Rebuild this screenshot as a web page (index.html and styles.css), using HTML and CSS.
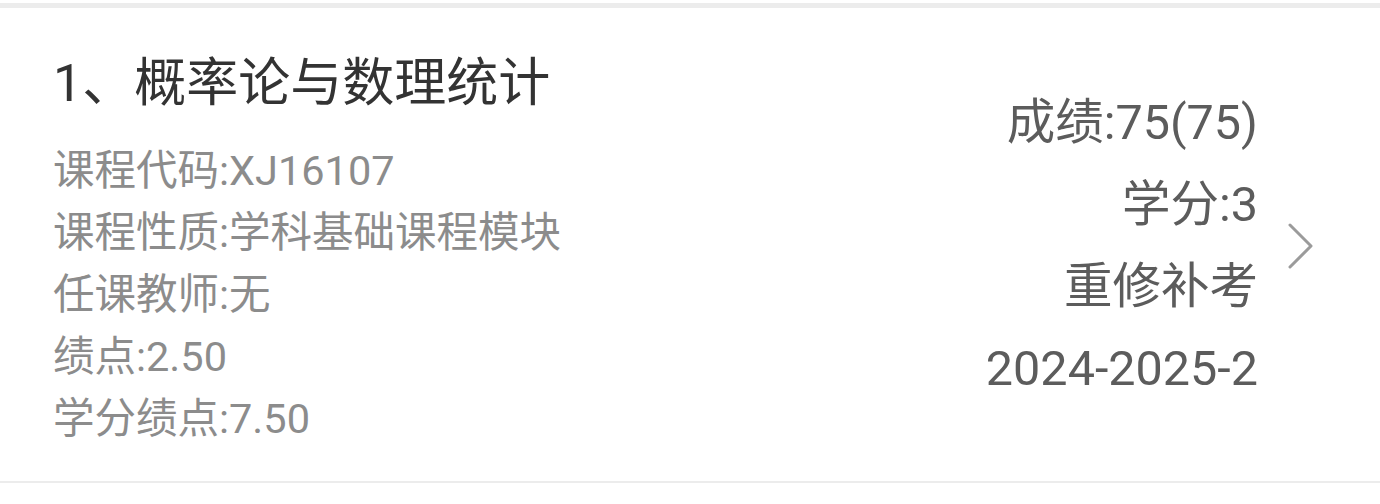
FILE: index.html
```html
<!DOCTYPE html>
<html lang="zh-CN">
<head>
    <meta charset="UTF-8">
    <meta name="viewport" content="width=device-width, initial-scale=1.0">
    <title>成绩查询</title>
    <link rel="stylesheet" href="styles.css">
</head>
<body>
    <div class="list">
        <div class="card card-stub"></div>
        <div class="card grade-item">
            <div class="info">
                <h2 class="course-name">1、概率论与数理统计</h2>
                <div class="line">课程代码:XJ16107</div>
                <div class="line">课程性质:学科基础课程模块</div>
                <div class="line">任课教师:无</div>
                <div class="line">绩点:2.50</div>
                <div class="line">学分绩点:7.50</div>
            </div>
            <div class="summary">
                <div class="value">成绩:75(75)</div>
                <div class="value">学分:3</div>
                <div class="value">重修补考</div>
                <div class="value">2024-2025-2</div>
            </div>
            <svg class="arrow" width="26" height="46" viewBox="0 0 26 46">
                <path d="M2 2 L23 23 L2 44" fill="none" stroke="#9b9b9b" stroke-width="3" stroke-linecap="round" stroke-linejoin="round"/>
            </svg>
        </div>
        <div class="card card-stub last"></div>
    </div>
</body>
</html>
```

FILE: styles.css
```css
body {
    margin: 0;
    padding: 0;
    background-color: #fff;
    font-family: Roboto, "Noto Sans CJK SC", sans-serif;
}

.list {
    display: flex;
    flex-direction: column;
    background-color: #ececec;
}

.card {
    background-color: #fff;
}

.card-stub {
    height: 3px;
}

.card-stub.last {
    height: 40px;
}

.grade-item {
    margin: 5px 0 2px;
    height: 473px;
    box-sizing: border-box;
    padding: 40px 66px 0 53px;
    display: flex;
    align-items: flex-start;
}

.info {
    flex: 1;
}

.course-name {
    margin: 0 0 20px;
    font-size: 52px;
    font-weight: normal;
    line-height: 72px;
    color: #333;
}

.line {
    font-size: 41.5px;
    line-height: 62px;
    color: #8c8c8c;
}

.summary {
    align-self: center;
    margin-top: -38px;
    text-align: right;
}

.value {
    font-size: 48.5px;
    line-height: 82px;
    color: #5c5c5c;
}

.arrow {
    align-self: center;
    margin: -38px 0 0 30px;
}
```
